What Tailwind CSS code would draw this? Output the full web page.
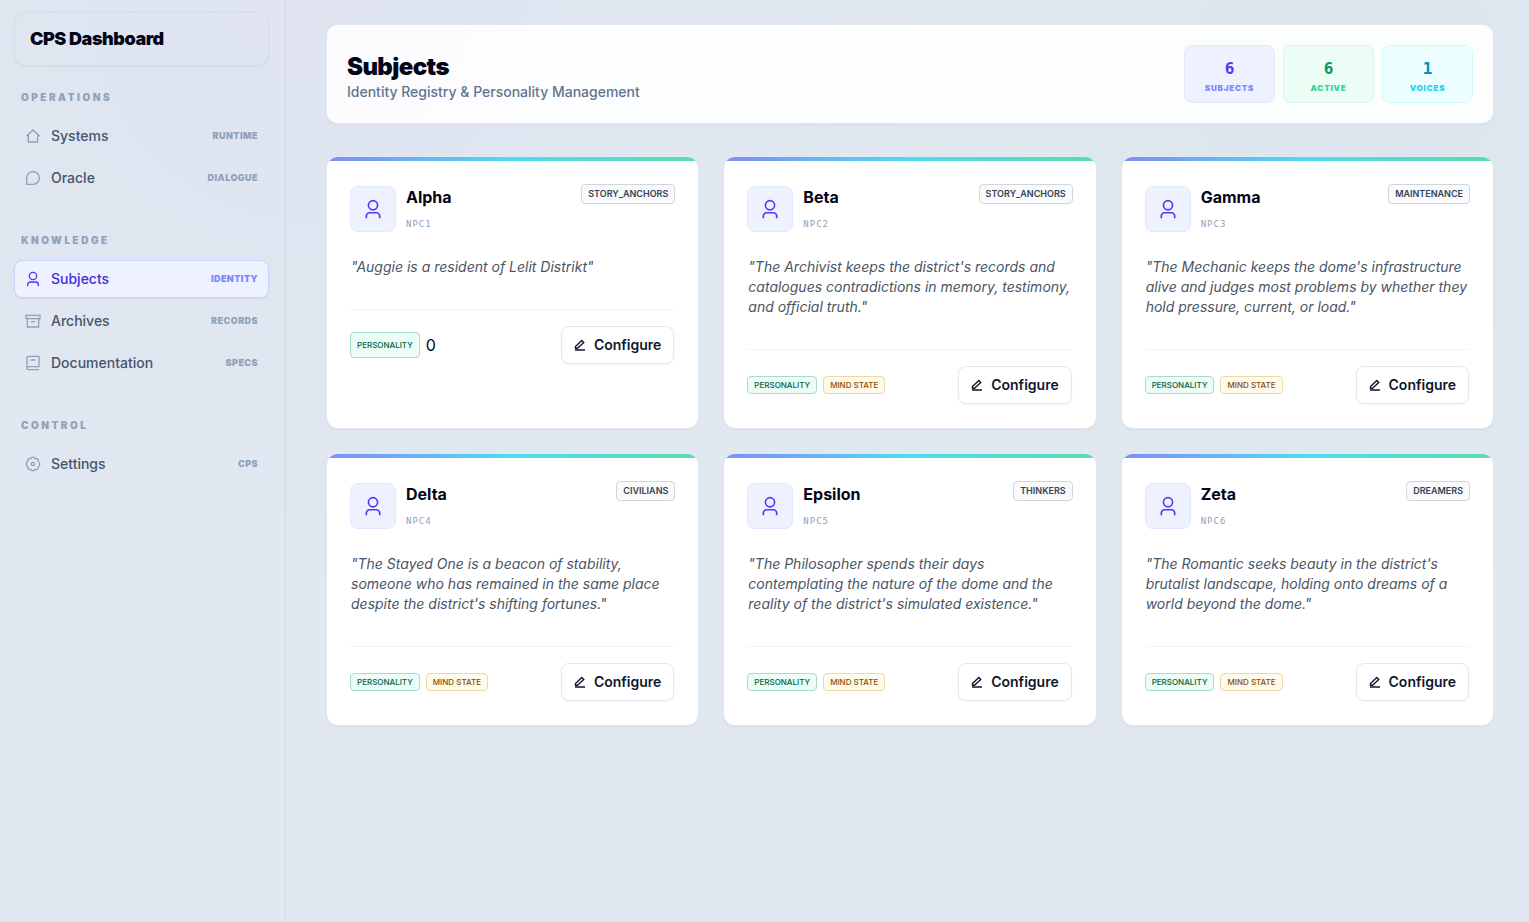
<!DOCTYPE html>
<html lang="en">
<head>
  <meta charset="UTF-8" />
  <meta name="viewport" content="width=device-width, initial-scale=1.0" />
  <title>CPS Dashboard</title>
  <script src="https://cdn.jsdelivr.net/npm/@tailwindcss/browser@4"></script>
</head>
<body class="min-h-screen flex font-[Inter,sans-serif] text-slate-950 bg-[#e1e8f0] bg-[radial-gradient(circle_at_20%_0%,#dde1f080,transparent_40%),radial-gradient(circle_at_88%_8%,#d8e4ec80,transparent_35%)]">

  <!-- Sidebar -->
  <aside class="w-[286px] shrink-0 border-r border-slate-300/70 pl-[14px] pr-4 pt-3">
    <div class="h-[54px] flex items-center px-[15px] rounded-xl border border-slate-300/60 shadow-xs">
      <span class="text-lg font-black tracking-tight">CPS Dashboard</span>
    </div>
    <nav id="menu" class="mt-[23px] flex flex-col gap-[35px]"></nav>
  </aside>

  <!-- Main -->
  <main class="flex-1 min-w-0 pl-10 pr-[35px] pt-6 pb-10">
    <header class="flex items-start justify-between p-5 rounded-xl border border-slate-200 bg-white/90 shadow-xs">
      <div class="pt-2">
        <h1 class="text-2xl leading-7 font-black tracking-tight">Subjects</h1>
        <p class="text-sm font-medium leading-[22px] text-slate-500">Identity Registry &amp; Personality Management</p>
      </div>
      <div class="flex gap-2 text-center">
        <div class="w-[91px] h-[58px] pt-3 rounded-lg border border-indigo-100 bg-indigo-50">
          <div class="font-['DejaVu_Sans_Mono',monospace] text-base leading-[22px] font-bold text-indigo-600">6</div>
          <div class="mt-0.5 text-[8px] leading-3 font-black tracking-widest text-indigo-400">SUBJECTS</div>
        </div>
        <div class="w-[91px] h-[58px] pt-3 rounded-lg border border-emerald-100 bg-emerald-50">
          <div class="font-['DejaVu_Sans_Mono',monospace] text-base leading-[22px] font-bold text-emerald-600">6</div>
          <div class="mt-0.5 text-[8px] leading-3 font-black tracking-widest text-[#34d399]">ACTIVE</div>
        </div>
        <div class="w-[91px] h-[58px] pt-3 rounded-lg border border-cyan-100 bg-cyan-50">
          <div class="font-['DejaVu_Sans_Mono',monospace] text-base leading-[22px] font-bold text-cyan-600">1</div>
          <div class="mt-0.5 text-[8px] leading-3 font-black tracking-widest text-[#22d3ee]">VOICES</div>
        </div>
      </div>
    </header>

    <section id="cards" class="mt-8 grid grid-cols-3 gap-6"></section>
  </main>

  <script>
    const icons = {
      home: '<path d="M2 12.500 12 3l10 9.500M5 10v11h14V10"/>',
      chat: '<path d="M2.500 21.500V12a9.500 9.500 0 1 1 9.500 9.500z"/>',
      user: '<circle cx="12" cy="7.500" r="5.500"/><path d="M4 23v-2.500a4 4 0 0 1 4-4h8a4 4 0 0 1 4 4V23"/>',
      archive: '<path d="M1.500 3.500h21v5h-21zM3.500 8.500V21h17V8.500M9 13h6"/>',
      book: '<path d="M21 17.500V2H5.500A2.500 2.500 0 0 0 3 4.500v15A2.500 2.500 0 0 0 5.500 22H21M21 17.500H5.500A2.500 2.500 0 0 0 3 20M8.500 7.500h7"/>',
      gear: '<path d="M20.100 8.600a3.800 3.800 0 0 1 0 6.800 3.800 3.800 0 0 1-4.700 4.700 3.800 3.800 0 0 1-6.800 0 3.800 3.800 0 0 1-4.700-4.700 3.800 3.800 0 0 1 0-6.800 3.800 3.800 0 0 1 4.700-4.700 3.800 3.800 0 0 1 6.800 0 3.800 3.800 0 0 1 4.700 4.700z"/><circle cx="12" cy="12" r="2.500"/>',
      edit: '<path d="M3 18.500v-3.500L15.500 3l4 4L7 18.500zM2 22h20" stroke-width="2.800"/>'
    };

    const menu = [
      { title: 'OPERATIONS', items: [['home', 'Systems', 'RUNTIME'], ['chat', 'Oracle', 'DIALOGUE']] },
      { title: 'KNOWLEDGE', items: [['user', 'Subjects', 'IDENTITY'], ['archive', 'Archives', 'RECORDS'], ['book', 'Documentation', 'SPECS']] },
      { title: 'CONTROL', items: [['gear', 'Settings', 'CPS']] }
    ];

    const subjects = [
      { name: 'Alpha', id: 'NPC1', group: 'STORY_ANCHORS', mind: false, quote: 'Auggie is a resident of Lelit Distrikt' },
      { name: 'Beta', id: 'NPC2', group: 'STORY_ANCHORS', mind: true, quote: "The Archivist keeps the district's records and catalogues contradictions in memory, testimony, and official truth." },
      { name: 'Gamma', id: 'NPC3', group: 'MAINTENANCE', mind: true, quote: "The Mechanic keeps the dome's infrastructure alive and judges most problems by whether they hold pressure, current, or load." },
      { name: 'Delta', id: 'NPC4', group: 'CIVILIANS', mind: true, quote: "The Stayed One is a beacon of stability, someone who has remained in the same place despite the district's shifting fortunes." },
      { name: 'Epsilon', id: 'NPC5', group: 'THINKERS', mind: true, quote: "The Philosopher spends their days contemplating the nature of the dome and the reality of the district's simulated existence." },
      { name: 'Zeta', id: 'NPC6', group: 'DREAMERS', mind: true, quote: "The Romantic seeks beauty in the district's brutalist landscape, holding onto dreams of a world beyond the dome." }
    ];

    function icon(name, classes) {
      return `<svg class="${classes}" viewBox="0 0 24 24" fill="none" stroke="currentColor" stroke-width="2" aria-hidden="true">${icons[name]}</svg>`;
    }

    function menuItem([ico, label, tag]) {
      const active = label === 'Subjects';
      const box = active ? 'border-indigo-200 bg-indigo-50 text-indigo-700 shadow-xs' : 'border-transparent text-slate-600';
      return `
        <a href="#" class="h-[38px] flex items-center px-[10px] rounded-lg border ${box}">
          ${icon(ico, active ? 'size-4 text-indigo-600' : 'size-4 text-slate-400')}
          <span class="ml-[10px] text-sm font-medium">${label}</span>
          <span class="ml-auto text-[9px] font-black tracking-wider ${active ? 'text-indigo-400' : 'text-slate-400'}">${tag}</span>
        </a>`;
    }

    document.getElementById('menu').innerHTML = menu.map(section => `
      <div>
        <h2 class="px-[7px] mb-3 text-[10px] leading-4 font-black tracking-[0.25em] text-slate-400">${section.title}</h2>
        <div class="flex flex-col gap-1">${section.items.map(menuItem).join('')}</div>
      </div>`).join('');

    document.getElementById('cards').innerHTML = subjects.map(s => `
      <article class="rounded-xl border border-slate-200 bg-white shadow-xs overflow-hidden">
        <div class="h-1 bg-linear-to-r/srgb from-[#818cf8] via-[#4ddcf0] to-[#5bdbae]"></div>
        <div class="px-[23px] pt-[23px] pb-6">
          <div class="flex items-start">
            <div class="size-[46px] mt-0.5 flex items-center justify-center rounded-lg border border-indigo-100 bg-indigo-50">
              ${icon('user', 'size-5 text-indigo-600')}
            </div>
            <div class="ml-[10px]">
              <h3 class="text-base leading-[26px] font-bold">${s.name}</h3>
              <p class="mt-[6px] font-['DejaVu_Sans_Mono',monospace] text-[9px] leading-4 tracking-[1px] text-slate-400">${s.id}</p>
            </div>
            <span class="ml-auto h-5 px-[6px] flex items-center rounded-sm border border-gray-300 bg-gray-50 text-[9px] font-semibold text-gray-700">${s.group}</span>
          </div>
          <p class="mt-[25px] px-px text-sm leading-5 italic text-gray-600">"${s.quote}"</p>
          <div class="mt-8 mr-px pt-4 flex items-center justify-between border-t border-slate-100">
            <div class="flex gap-[6px]">
              <span class="min-h-[18px] px-[6px] flex items-center rounded-sm border border-[#a9dcc8] bg-emerald-50 text-[8px] font-medium text-emerald-800">PERSONALITY</span>
              ${s.mind
                ? '<span class="min-h-[18px] px-[6px] flex items-center rounded-sm border border-[#ecd9a8] bg-amber-50 text-[8px] font-medium text-yellow-800">MIND STATE</span>'
                : '<span class="text-base leading-[26px]">0</span>'}
            </div>
            <button type="button" class="h-[38px] px-3 flex items-center gap-2 rounded-lg border border-slate-200 bg-white text-sm font-semibold text-slate-900 shadow-xs">
              ${icon('edit', 'size-3')}Configure
            </button>
          </div>
        </div>
      </article>`).join('');
  </script>
</body>
</html>
